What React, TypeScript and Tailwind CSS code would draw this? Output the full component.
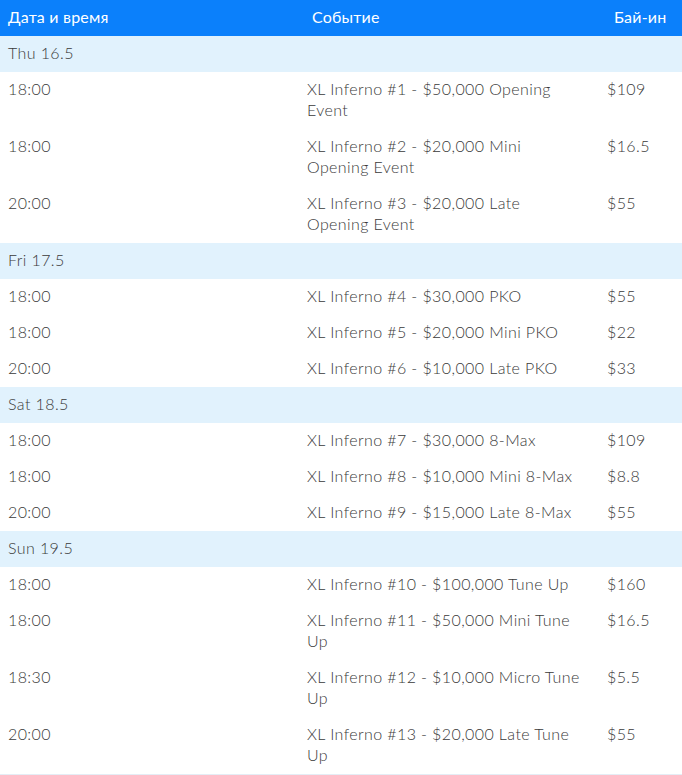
type Ev = { time: string; lines: string[]; buyin: string };
type Day = { day: string; events: Ev[] };

const days: Day[] = [
  {
    day: "Thu 16.5",
    events: [
      { time: "18:00", lines: ["XL Inferno #1 - $50,000 Opening", "Event"], buyin: "$109" },
      { time: "18:00", lines: ["XL Inferno #2 - $20,000 Mini", "Opening Event"], buyin: "$16.5" },
      { time: "20:00", lines: ["XL Inferno #3 - $20,000 Late", "Opening Event"], buyin: "$55" },
    ],
  },
  {
    day: "Fri 17.5",
    events: [
      { time: "18:00", lines: ["XL Inferno #4 - $30,000 PKO"], buyin: "$55" },
      { time: "18:00", lines: ["XL Inferno #5 - $20,000 Mini PKO"], buyin: "$22" },
      { time: "20:00", lines: ["XL Inferno #6 - $10,000 Late PKO"], buyin: "$33" },
    ],
  },
  {
    day: "Sat 18.5",
    events: [
      { time: "18:00", lines: ["XL Inferno #7 - $30,000 8-Max"], buyin: "$109" },
      { time: "18:00", lines: ["XL Inferno #8 - $10,000 Mini 8-Max"], buyin: "$8.8" },
      { time: "20:00", lines: ["XL Inferno #9 - $15,000 Late 8-Max"], buyin: "$55" },
    ],
  },
  {
    day: "Sun 19.5",
    events: [
      { time: "18:00", lines: ["XL Inferno #10 - $100,000 Tune Up"], buyin: "$160" },
      { time: "18:00", lines: ["XL Inferno #11 - $50,000 Mini Tune", "Up"], buyin: "$16.5" },
      { time: "18:30", lines: ["XL Inferno #12 - $10,000 Micro Tune", "Up"], buyin: "$5.5" },
      { time: "20:00", lines: ["XL Inferno #13 - $20,000 Late Tune", "Up"], buyin: "$55" },
    ],
  },
];

function App() {
  return (
    <div
      className="w-[682px] bg-white text-[16px] leading-[21px] tracking-[0.4px] text-[#3a3a3a] font-light border-b border-[#e4edf5]"
      style={{ fontFamily: '"Lato", "Open Sans", sans-serif' }}
    >
      {/* шапка */}
      <div className="flex h-9 items-center pb-[3px] bg-[#0b80fb] text-white font-normal tracking-[0.2px]">
        <div className="w-[299px] pl-2">Дата и время</div>
        <div className="w-[300px] pl-[13px]">Событие</div>
        <div className="flex-1 pl-[15px]">Бай-ин</div>
      </div>
      {days.map((d) => (
        <div key={d.day}>
          <div className="flex h-9 items-center pb-[3px] bg-[#e1f2fd] pl-2">{d.day}</div>
          {d.events.map((e, i) => (
            <div key={i} className="flex pt-[6px] pb-[9px]">
              <div className="w-[299px] pl-2">{e.time}</div>
              <div className="w-[300px] pl-2">
                {e.lines.map((l) => (
                  <div key={l}>{l}</div>
                ))}
              </div>
              <div className="flex-1 pl-2">{e.buyin}</div>
            </div>
          ))}
        </div>
      ))}
    </div>
  );
}

export default App;
